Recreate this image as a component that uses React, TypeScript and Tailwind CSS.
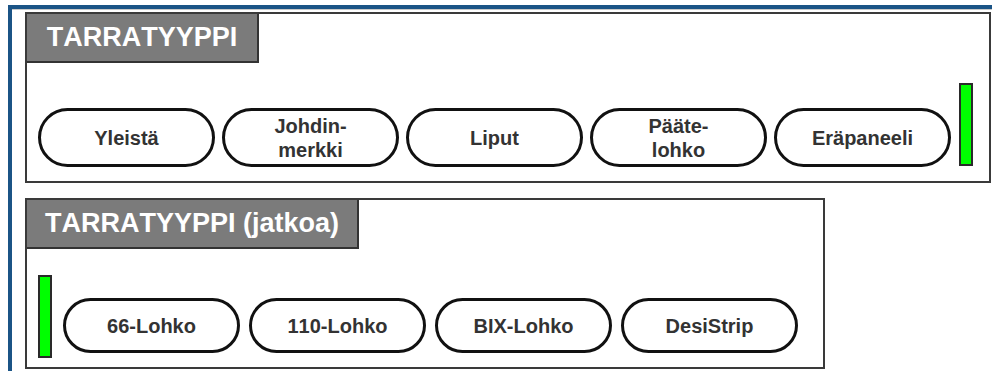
import React from 'react';

type PanelProps = {
  title: string;
  headerWidth: string;
  children: React.ReactNode;
  className?: string;
};

function Panel({ title, headerWidth, children, className }: PanelProps) {
  return (
    <div className={`border-2 border-[#3a3a3a] bg-white flex flex-col ${className ?? ''}`}>
      <div
        className={`${headerWidth} h-[49px] bg-[#7b7b7b] border-r-2 border-b-2 border-[#333] flex items-center justify-center text-white font-bold text-[27px] leading-none`}
      >
        {title}
      </div>
      {children}
    </div>
  );
}

function Pill({ label, lines, h }: { label?: string; lines?: string[]; h: string }) {
  return (
    <div
      className={`w-[177px] ${h} rounded-full border-[3px] border-[#111] bg-white flex flex-col items-center justify-center text-[#333] font-bold text-[20px] leading-[24px]`}
    >
      {lines ? lines.map((l) => <span key={l}>{l}</span>) : <span>{label}</span>}
    </div>
  );
}

function Scrollbar() {
  return <div className="w-[14px] h-[83px] bg-[#00ff00] border-2 border-[#2a2a2a] shrink-0" />;
}

export default function App() {
  return (
    <div
      className="w-[992px] h-[371px] bg-white pt-[5px] pl-[8px] overflow-hidden [font-kerning:none]"
      style={{ fontFamily: '"Liberation Sans", Arial, sans-serif' }}
    >
      <div className="h-full border-l-4 border-t-4 border-[#1b5486]">
        <div className="h-full border-t border-[#c8c8c8] pl-[13px] pt-[2px] flex flex-col gap-[15px]">
          <Panel title="TARRATYYPPI" headerWidth="w-[232px]" className="w-[966px] h-[171px]">
            <div className="flex-1 flex items-end pl-[11px] pb-[14px] gap-[7px]">
              <Pill label="Yleistä" h="h-[59px]" />
              <Pill lines={['Johdin-', 'merkki']} h="h-[59px]" />
              <Pill label="Liput" h="h-[59px]" />
              <Pill lines={['Pääte-', 'lohko']} h="h-[59px]" />
              <Pill label="Eräpaneeli" h="h-[59px]" />
              <div className="ml-[1px] mb-[1px]">
                <Scrollbar />
              </div>
            </div>
          </Panel>
          <Panel title="TARRATYYPPI (jatkoa)" headerWidth="w-[332px]" className="w-[800px] h-[171px]">
            <div className="flex-1 flex items-end pl-[11px] pb-[9px]">
              <Scrollbar />
              <div className="flex gap-[9px] ml-[11px] mb-[5px]">
                <Pill label="66-Lohko" h="h-[55px]" />
                <Pill label="110-Lohko" h="h-[55px]" />
                <Pill label="BIX-Lohko" h="h-[55px]" />
                <Pill label="DesiStrip" h="h-[55px]" />
              </div>
            </div>
          </Panel>
        </div>
      </div>
    </div>
  );
}
